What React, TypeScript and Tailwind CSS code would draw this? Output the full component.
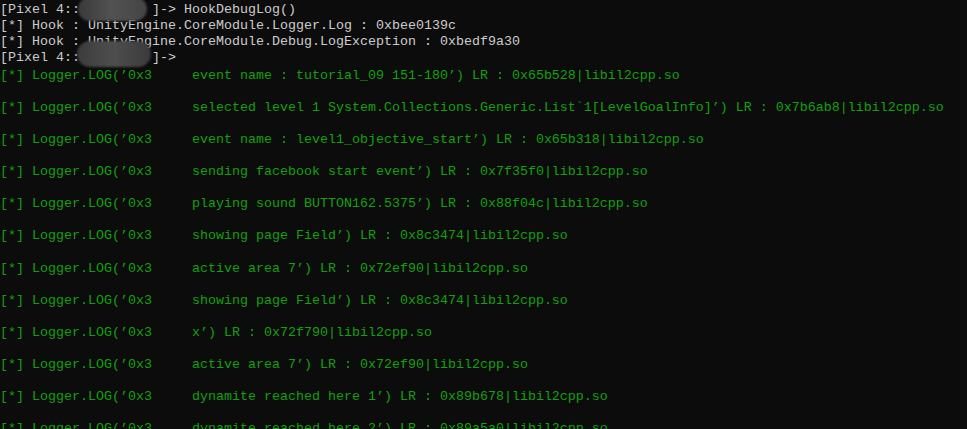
import React from "react";

const header = [
  "[Pixel 4::         ]-> HookDebugLog()",
  "[*] Hook : UnityEngine.CoreModule.Logger.Log : 0xbee0139c",
  "[*] Hook : UnityEngine.CoreModule.Debug.LogException : 0xbedf9a30",
  "[Pixel 4::         ]->",
];

const prefix = "[*] Logger.LOG(’0x3     ";

const logs = [
  "event name : tutorial_09 151-180’) LR : 0x65b528|libil2cpp.so",
  "selected level 1 System.Collections.Generic.List`1[LevelGoalInfo]’) LR : 0x7b6ab8|libil2cpp.so",
  "event name : level1_objective_start’) LR : 0x65b318|libil2cpp.so",
  "sending facebook start event’) LR : 0x7f35f0|libil2cpp.so",
  "playing sound BUTTON162.5375’) LR : 0x88f04c|libil2cpp.so",
  "showing page Field’) LR : 0x8c3474|libil2cpp.so",
  "active area 7’) LR : 0x72ef90|libil2cpp.so",
  "showing page Field’) LR : 0x8c3474|libil2cpp.so",
  "x’) LR : 0x72f790|libil2cpp.so",
  "active area 7’) LR : 0x72ef90|libil2cpp.so",
  "dynamite reached here 1’) LR : 0x89b678|libil2cpp.so",
  "dynamite reached here 2’) LR : 0x89a5a0|libil2cpp.so",
];

export default function App() {
  return (
    <div className="relative h-[429px] w-[967px] overflow-hidden bg-[#0c0c0c] font-['Liberation_Mono',monospace] text-[13.33px]">
      {/* console output */}
      <div className="pt-[2px]">
        {header.map((line, i) => (
          <div key={i} className="h-4 whitespace-pre leading-4 text-[#cccccc]">
            {line}
          </div>
        ))}
        <div className="pt-[2px]">
          {logs.map((line, i) => (
            <React.Fragment key={i}>
              <div className="h-4 whitespace-pre leading-4 text-[#13a10e]">
                {prefix + line}
              </div>
              <div className="h-[16.1px]" />
            </React.Fragment>
          ))}
        </div>
      </div>

      {/* redacted device id */}
      <div className="absolute left-[78px] top-[-3px] h-[24px] w-[69px] rounded-full bg-gradient-to-r from-[#3a3a3a] via-[#525252] to-[#444444] blur-[1px]" />
      <div className="absolute left-[77px] top-[41px] h-[26px] w-[74px] rounded-full bg-gradient-to-r from-[#3c3c3c] via-[#4e4e4e] to-[#3a3a3a] blur-[1px]" />
    </div>
  );
}
